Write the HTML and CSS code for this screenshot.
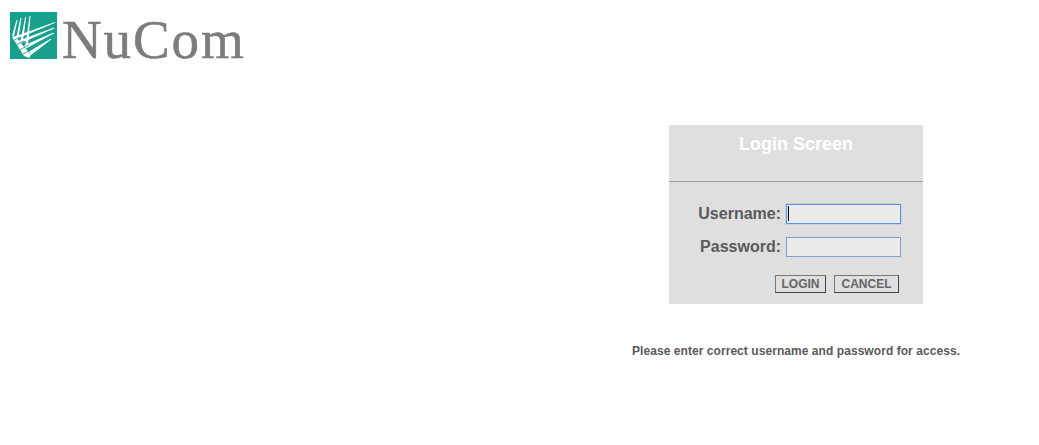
FILE: index.html
```html
<!DOCTYPE html>
<html lang="en">
<head>
    <meta charset="UTF-8">
    <title>NuCom - Login</title>
    <link rel="stylesheet" href="styles.css">
</head>
<body>
    <!-- logo -->
    <div class="header">
        <svg class="logo-mark" width="47" height="47" viewBox="0 0 47 47">
            <rect width="47" height="47" fill="#17a08c"/>
            <path fill="#fff" d="M2 25 L5 24 L21 43 L19 46 L14 44 Z"/>
            <g fill="#fff">
                <polygon points="6.500,8 7.500,8 4,24 2,24"/>
                <polygon points="10.500,6 11.500,6 8.500,26 6,26"/>
                <polygon points="15.200,5 16.200,5 13,29 10.500,29"/>
                <polygon points="19.500,4 20.500,4 18,33 15.500,33"/>
                <polygon points="45,10 45.300,10.800 5,27.500 3.500,25"/>
                <polygon points="44,15.500 44.300,16.500 11,31 9,28.500"/>
                <polygon points="43.500,20.500 43.800,21.500 16,36.500 14,33.500"/>
                <polygon points="41,26.500 41.300,27.500 21,43 19,39.500"/>
            </g>
            <g fill="none" stroke="#17a08c" stroke-width="0.800">
                <path d="M1 30 L10 25"/>
                <path d="M5 33 L14 29"/>
                <path d="M9 38 L19 33"/>
                <path d="M13 42 L23 37"/>
            </g>
        </svg>
        <span class="logo-text">NuCom</span>
    </div>

    <!-- login -->
    <div class="main">
        <form class="login-box">
            <h3>Login Screen</h3>
            <div class="form-body">
                <div class="form-row">
                    <label for="username">Username:</label>
                    <div class="field">
                        <input type="text" id="username" class="focused">
                        <span class="caret"></span>
                    </div>
                </div>
                <div class="form-row">
                    <label for="password">Password:</label>
                    <div class="field">
                        <input type="password" id="password">
                    </div>
                </div>
                <div class="form-buttons">
                    <button type="button" class="btn btn-login">LOGIN</button>
                    <button type="button" class="btn btn-cancel">CANCEL</button>
                </div>
            </div>
        </form>
        <p class="message">Please enter correct username and password for access.</p>
    </div>
</body>
</html>
```

FILE: styles.css
```css
* {
    box-sizing: border-box;
    margin: 0;
    padding: 0;
    font-family: "Liberation Sans", Arial, sans-serif;
}

body {
    background: #fff;
    color: #5a5a5a;
}

/* logo */
.header {
    display: flex;
    align-items: flex-start;
    height: 125px;
    padding: 12px 0 0 10px;
}

.logo-mark {
    flex: none;
}

.logo-text {
    margin-left: 5px;
    font-family: "Liberation Serif", serif;
    font-size: 55px;
    line-height: 55px;
    color: #7c7c7e;
    letter-spacing: 1.9px;
    -webkit-text-stroke: 0.5px #7c7c7e;
}

/* login */
.main {
    width: 328px;
    margin-left: 632px;
    display: flex;
    flex-direction: column;
    align-items: center;
}

.login-box {
    width: 254px;
    height: 179px;
    background: #dfdfdf;
}

.login-box h3 {
    height: 57px;
    padding-top: 9px;
    border-bottom: 1px solid #999;
    font-size: 18px;
    line-height: 20px;
    font-weight: bold;
    text-align: center;
    color: #fff;
}

.form-body {
    padding: 22px 22px 0 0;
}

.form-row {
    display: flex;
    justify-content: flex-end;
    align-items: center;
    gap: 5px;
    margin-bottom: 13px;
}

.form-row label {
    font-size: 16px;
    line-height: 20px;
    font-weight: bold;
}

.field {
    position: relative;
    width: 115px;
    height: 20px;
}

.field input {
    display: block;
    width: 100%;
    height: 100%;
    background: #ebebeb;
    border: 1px solid #7ba2cf;
    outline: none;
}

.field input.focused {
    border-color: #5b93e6;
    box-shadow: 0 0 1px #5b93e6;
}

.caret {
    position: absolute;
    top: 2px;
    left: 2px;
    width: 1px;
    height: 15px;
    background: #000;
}

.form-buttons {
    display: flex;
    justify-content: flex-end;
    gap: 8px;
    margin-top: 18px;
    padding-right: 2px;
}

.btn {
    height: 18px;
    border: 1px solid;
    border-color: #777 #444 #444 #777;
    background: #dfdfdf;
    color: #666;
    font-size: 12px;
    font-weight: bold;
    line-height: 16px;
}

.btn-login {
    width: 51px;
}

.btn-cancel {
    width: 65px;
}

.message {
    margin-top: 40px;
    font-size: 12px;
    line-height: 14px;
    font-weight: bold;
    letter-spacing: 0.06px;
    white-space: nowrap;
}
```
